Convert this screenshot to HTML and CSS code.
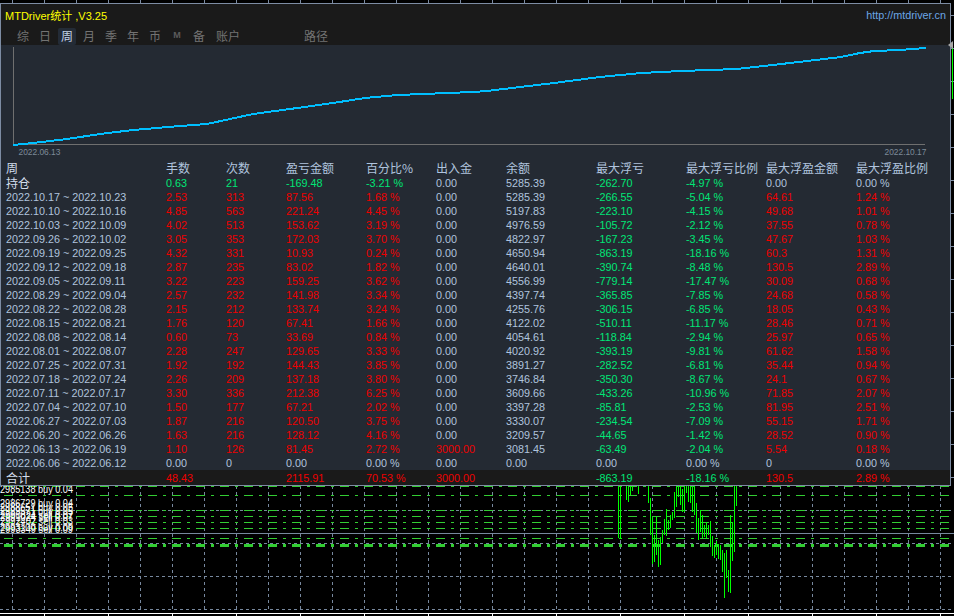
FILE: index.html
```html
<!DOCTYPE html>
<html lang="zh">
<head>
<meta charset="utf-8">
<title>MTDriver统计</title>
<link rel="stylesheet" href="styles.css">
</head>
<body>
<div class="desk">
<svg class="market" width="954" height="616" viewBox="0 0 954 616">
  <g class="grid">
    <path d="M0 510.5H954M0 543.5H954M0 576.5H954M0 609.5H954"/>
    <path d="M12.5 486V612M44.5 486V612M76.5 486V612M108.5 486V612M140.5 486V612M172.5 486V612M204.5 486V612M236.5 486V612M268.5 486V612M300.5 486V612M332.5 486V612M364.5 486V612M396.5 486V612M428.5 486V612M460.5 486V612M492.5 486V612M524.5 486V612M556.5 486V612M588.5 486V612M620.5 486V612M652.5 486V612M684.5 486V612M716.5 486V612M748.5 486V612M780.5 486V612M812.5 486V612M844.5 486V612M876.5 486V612M908.5 486V612M940.5 486V612"/>
  </g>
  <path class="level" d="M0 533.5H954"/>
  <g class="orders">
    <path d="M-20 486.5H954M-20 495.5H954M-20 510.5H954M-20 516.5H954M-20 522.5H954M-20 528.5H954M-20 538.5H954"/>
    <path class="thick" d="M-20 545H954"/>
  </g>
  <g class="sticks" transform="translate(560 470) scale(.33333)">
    <path d="M176 44V205M181 44V205M176 205H187M199 44V90M205 44V95M211 44V75M217 44V62M235 44V72M265 44V100M271 85V195M277 140V283M283 195V275M289 140V255M295 210V290M301 200V285M307 180V220M313 148V195M319 118V198M325 150V180M331 135V175M337 125V150M343 65V145M349 44V110M355 44V80M361 44V105M367 58V125M373 44V125M379 44V70M385 44V95M391 44V100M397 44V125M403 44V135M409 98V190M415 145V210M421 120V185M427 135V205M433 165V200M439 155V205M445 165V195M451 152V230M457 198V258M463 225V263M469 212V255M475 222V268M481 225V270M487 240V305M493 250V383M499 240V325M505 300V365M511 135V368M517 155V272M523 44V245M529 44V108"/>
  </g>
  <g class="labels">
    <text x="0" y="493" textLength="73" lengthAdjust="spacingAndGlyphs">2985138 buy 0.04</text>
    <text x="0" y="507" textLength="73" lengthAdjust="spacingAndGlyphs">2986729 buy 0.04</text>
    <text x="0" y="511" textLength="73" lengthAdjust="spacingAndGlyphs">2988651 buy 0.05</text>
    <text x="0" y="515" textLength="73" lengthAdjust="spacingAndGlyphs">2989571 buy 0.05</text>
    <text x="0" y="519" textLength="73" lengthAdjust="spacingAndGlyphs">2990824 sell 0.07</text>
    <text x="0" y="521" textLength="73" lengthAdjust="spacingAndGlyphs">2991024 sell 0.07</text>
    <text x="0" y="525" textLength="73" lengthAdjust="spacingAndGlyphs">2992402 sell 0.03</text>
    <text x="0" y="531" textLength="73" lengthAdjust="spacingAndGlyphs">2993100 buy 0.09</text>
    <text x="0" y="533" textLength="73" lengthAdjust="spacingAndGlyphs">2993349 sell 0.09</text>
  </g>
  <path class="ticks" d="M12.5 0V3M44.5 0V3M76.5 0V3M108.5 0V3M140.5 0V3M172.5 0V3M204.5 0V3M236.5 0V3M268.5 0V3M300.5 0V3M332.5 0V3M364.5 0V3M396.5 0V3M428.5 0V3M460.5 0V3M492.5 0V3M524.5 0V3M556.5 0V3M588.5 0V3M620.5 0V3M652.5 0V3M684.5 0V3M716.5 0V3M748.5 0V3M780.5 0V3M812.5 0V3M844.5 0V3M876.5 0V3M908.5 0V3M940.5 0V3"/>
  <path class="ticks" d="M951 15.5H954M951 48.5H954M951 81.5H954M951 114.5H954M951 147.5H954M951 180.5H954M951 213.5H954M951 246.5H954M951 279.5H954M951 312.5H954M951 345.5H954M951 378.5H954M951 411.5H954M951 444.5H954M951 477.5H954"/>
  <path class="timeaxis" d="M0 613.5H954M44.5 613V616M108.5 613V616M172.5 613V616M236.5 613V616M300.5 613V616M364.5 613V616M428.5 613V616M492.5 613V616M556.5 613V616M620.5 613V616M684.5 613V616M748.5 613V616M812.5 613V616M876.5 613V616M940.5 613V616"/>
  <path class="bar" d="M952.5 48V99"/>
</svg>

<section class="panel">
  <header class="head">
    <div class="titlebar">
      <span class="title">MTDriver统计 ,V3.25</span>
      <span class="url">http://mtdriver.cn</span>
    </div>
    <nav class="tabs">
      <span class="tab">综</span>
      <span class="tab">日</span>
      <span class="tab active">周</span>
      <span class="tab">月</span>
      <span class="tab">季</span>
      <span class="tab">年</span>
      <span class="tab">币</span>
      <span class="tab mini">M</span>
      <span class="tab">备</span>
      <span class="tab wide">账户</span>
      <span class="tab path">路径</span>
    </nav>
  </header>
  <div class="equity">
    <svg width="948" height="117" viewBox="1 45 948 117">
      <path class="axis" d="M13.5 47V144.5H925"/>
      <polyline class="curve" points="13,145 33,143 67,139 100,134 133,130 180,126 207,124 230,119 253,114 290,109 333,103 365,98 397,95 423,94 473,92 487,91 520,87 554,83 600,77 641,73 681,71 737,69 790,63 841,57 860,53 874,51 900,50 926,48"/>
      <text class="stamp" x="18.5" y="155">2022.06.13</text>
      <text class="stamp" x="884.5" y="155">2022.10.17</text>
    </svg>
    <span class="grip"></span>
  </div>
  <div class="table">
    <div class="row top"><span class="em">周</span><span>手数</span><span>次数</span><span>盈亏金额</span><span>百分比%</span><span>出入金</span><span>余额</span><span>最大浮亏</span><span>最大浮亏比例</span><span>最大浮盈金额</span><span>最大浮盈比例</span></div>
    <div class="row"><span class="em cjk">持仓</span><span class="g">0.63</span><span class="g">21</span><span class="g">-169.48</span><span class="g">-3.21 %</span><span>0.00</span><span>5285.39</span><span class="g">-262.70</span><span class="g">-4.97 %</span><span>0.00</span><span>0.00 %</span></div>
    <div class="row"><span>2022.10.17 ~ 2022.10.23</span><span class="r">2.53</span><span class="r">313</span><span class="r">87.56</span><span class="r">1.68 %</span><span>0.00</span><span>5285.39</span><span class="g">-266.55</span><span class="g">-5.04 %</span><span class="r">64.61</span><span class="r">1.24 %</span></div>
    <div class="row"><span>2022.10.10 ~ 2022.10.16</span><span class="r">4.85</span><span class="r">563</span><span class="r">221.24</span><span class="r">4.45 %</span><span>0.00</span><span>5197.83</span><span class="g">-223.10</span><span class="g">-4.15 %</span><span class="r">49.68</span><span class="r">1.01 %</span></div>
    <div class="row"><span>2022.10.03 ~ 2022.10.09</span><span class="r">4.02</span><span class="r">513</span><span class="r">153.62</span><span class="r">3.19 %</span><span>0.00</span><span>4976.59</span><span class="g">-105.72</span><span class="g">-2.12 %</span><span class="r">37.55</span><span class="r">0.78 %</span></div>
    <div class="row"><span>2022.09.26 ~ 2022.10.02</span><span class="r">3.05</span><span class="r">353</span><span class="r">172.03</span><span class="r">3.70 %</span><span>0.00</span><span>4822.97</span><span class="g">-167.23</span><span class="g">-3.45 %</span><span class="r">47.67</span><span class="r">1.03 %</span></div>
    <div class="row"><span>2022.09.19 ~ 2022.09.25</span><span class="r">4.32</span><span class="r">331</span><span class="r">10.93</span><span class="r">0.24 %</span><span>0.00</span><span>4650.94</span><span class="g">-863.19</span><span class="g">-18.16 %</span><span class="r">60.3</span><span class="r">1.31 %</span></div>
    <div class="row"><span>2022.09.12 ~ 2022.09.18</span><span class="r">2.87</span><span class="r">235</span><span class="r">83.02</span><span class="r">1.82 %</span><span>0.00</span><span>4640.01</span><span class="g">-390.74</span><span class="g">-8.48 %</span><span class="r">130.5</span><span class="r">2.89 %</span></div>
    <div class="row"><span>2022.09.05 ~ 2022.09.11</span><span class="r">3.22</span><span class="r">223</span><span class="r">159.25</span><span class="r">3.62 %</span><span>0.00</span><span>4556.99</span><span class="g">-779.14</span><span class="g">-17.47 %</span><span class="r">30.09</span><span class="r">0.68 %</span></div>
    <div class="row"><span>2022.08.29 ~ 2022.09.04</span><span class="r">2.57</span><span class="r">232</span><span class="r">141.98</span><span class="r">3.34 %</span><span>0.00</span><span>4397.74</span><span class="g">-365.85</span><span class="g">-7.85 %</span><span class="r">24.68</span><span class="r">0.58 %</span></div>
    <div class="row"><span>2022.08.22 ~ 2022.08.28</span><span class="r">2.15</span><span class="r">212</span><span class="r">133.74</span><span class="r">3.24 %</span><span>0.00</span><span>4255.76</span><span class="g">-306.15</span><span class="g">-6.85 %</span><span class="r">18.05</span><span class="r">0.43 %</span></div>
    <div class="row"><span>2022.08.15 ~ 2022.08.21</span><span class="r">1.76</span><span class="r">120</span><span class="r">67.41</span><span class="r">1.66 %</span><span>0.00</span><span>4122.02</span><span class="g">-510.11</span><span class="g">-11.17 %</span><span class="r">28.46</span><span class="r">0.71 %</span></div>
    <div class="row"><span>2022.08.08 ~ 2022.08.14</span><span class="r">0.60</span><span class="r">73</span><span class="r">33.69</span><span class="r">0.84 %</span><span>0.00</span><span>4054.61</span><span class="g">-118.84</span><span class="g">-2.94 %</span><span class="r">25.97</span><span class="r">0.65 %</span></div>
    <div class="row"><span>2022.08.01 ~ 2022.08.07</span><span class="r">2.28</span><span class="r">247</span><span class="r">129.65</span><span class="r">3.33 %</span><span>0.00</span><span>4020.92</span><span class="g">-393.19</span><span class="g">-9.81 %</span><span class="r">61.62</span><span class="r">1.58 %</span></div>
    <div class="row"><span>2022.07.25 ~ 2022.07.31</span><span class="r">1.92</span><span class="r">192</span><span class="r">144.43</span><span class="r">3.85 %</span><span>0.00</span><span>3891.27</span><span class="g">-282.52</span><span class="g">-6.81 %</span><span class="r">35.44</span><span class="r">0.94 %</span></div>
    <div class="row"><span>2022.07.18 ~ 2022.07.24</span><span class="r">2.26</span><span class="r">209</span><span class="r">137.18</span><span class="r">3.80 %</span><span>0.00</span><span>3746.84</span><span class="g">-350.30</span><span class="g">-8.67 %</span><span class="r">24.1</span><span class="r">0.67 %</span></div>
    <div class="row"><span>2022.07.11 ~ 2022.07.17</span><span class="r">3.30</span><span class="r">336</span><span class="r">212.38</span><span class="r">6.25 %</span><span>0.00</span><span>3609.66</span><span class="g">-433.26</span><span class="g">-10.96 %</span><span class="r">71.85</span><span class="r">2.07 %</span></div>
    <div class="row"><span>2022.07.04 ~ 2022.07.10</span><span class="r">1.50</span><span class="r">177</span><span class="r">67.21</span><span class="r">2.02 %</span><span>0.00</span><span>3397.28</span><span class="g">-85.81</span><span class="g">-2.53 %</span><span class="r">81.95</span><span class="r">2.51 %</span></div>
    <div class="row"><span>2022.06.27 ~ 2022.07.03</span><span class="r">1.87</span><span class="r">216</span><span class="r">120.50</span><span class="r">3.75 %</span><span>0.00</span><span>3330.07</span><span class="g">-234.54</span><span class="g">-7.09 %</span><span class="r">55.15</span><span class="r">1.71 %</span></div>
    <div class="row"><span>2022.06.20 ~ 2022.06.26</span><span class="r">1.63</span><span class="r">216</span><span class="r">128.12</span><span class="r">4.16 %</span><span>0.00</span><span>3209.57</span><span class="g">-44.65</span><span class="g">-1.42 %</span><span class="r">28.52</span><span class="r">0.90 %</span></div>
    <div class="row"><span>2022.06.13 ~ 2022.06.19</span><span class="r">1.10</span><span class="r">126</span><span class="r">81.45</span><span class="r">2.72 %</span><span class="r">3000.00</span><span>3081.45</span><span class="g">-63.49</span><span class="g">-2.04 %</span><span class="r">5.54</span><span class="r">0.18 %</span></div>
    <div class="row"><span>2022.06.06 ~ 2022.06.12</span><span>0.00</span><span>0</span><span>0.00</span><span>0.00 %</span><span>0.00</span><span>0.00</span><span>0.00</span><span>0.00 %</span><span>0</span><span>0.00 %</span></div>
    <div class="row total"><span class="em cjk">合计</span><span class="r">48.43</span><span></span><span class="r">2115.91</span><span class="r">70.53 %</span><span class="r">3000.00</span><span></span><span class="g">-863.19</span><span class="g">-18.16 %</span><span class="r">130.5</span><span class="r">2.89 %</span></div>
  </div>
</section>
</div>
</body>
</html>
```

FILE: styles.css
```css
html, body {
  margin: 0;
  padding: 0;
  background: #000;
  overflow: hidden;
}

.desk {
  position: relative;
  width: 954px;
  height: 616px;
  overflow: hidden;
  font-family: "Liberation Sans", "Noto Sans CJK SC", sans-serif;
}

.market {
  position: absolute;
  left: 0;
  top: 0;
  display: block;
}

.market path {
  fill: none;
  shape-rendering: crispEdges;
}

.grid path {
  stroke: #77889e;
  stroke-width: 1;
  stroke-dasharray: 3 3;
}

.level {
  stroke: #77889e;
  stroke-width: 1;
}

.orders path {
  stroke: #32cd32;
  stroke-width: 1;
  stroke-dasharray: 9 6 3 6;
}

.orders .thick {
  stroke-width: 3;
}

.sticks path {
  stroke: #00ff00;
  stroke-width: 3;
}

.labels text {
  fill: #fff;
  font-size: 10.6px;
}

.ticks {
  stroke: #7d8ca3;
  stroke-width: 1;
}

.timeaxis {
  stroke: #fff;
  stroke-width: 1;
}

.bar {
  stroke: #00ff00;
  stroke-width: 1;
}

.panel {
  position: absolute;
  left: 0;
  top: 3px;
  box-sizing: border-box;
  width: 951px;
  height: 483px;
  border: 1px solid #7d8ca3;
  background: #242a33;
  display: flex;
  flex-direction: column;
}

.head {
  height: 41px;
  background: #1a1a1a;
  display: flex;
  flex-direction: column;
}

.titlebar {
  height: 21px;
  padding: 0 4px;
  display: flex;
  justify-content: space-between;
  align-items: center;
}

.title {
  color: #ffff00;
  font-size: 11px;
}

.url {
  color: #6ca6e6;
  font-size: 10.8px;
}

.tabs {
  flex: 1;
  display: flex;
  padding-left: 11px;
  align-items: flex-end;
}

.tab {
  width: 22px;
  height: 17px;
  line-height: 15px;
  text-align: center;
  font-size: 12px;
  color: #737373;
  font-family: "Noto Sans CJK SC", sans-serif;
  box-sizing: border-box;
}

.tab.active {
  background: #232b36;
  color: #c3d3e6;
  border-radius: 2px;
  width: 18px;
  margin: 0 2px;
}

.tab.mini {
  font-size: 9px;
  font-weight: 700;
  font-family: "Liberation Sans", sans-serif;
  color: #5c5c5c;
}

.tab.wide {
  width: 26px;
  margin-left: 5px;
}

.tab.path {
  width: 28px;
  margin-left: 61px;
}

.equity {
  position: relative;
  height: 117px;
}

.equity svg {
  display: block;
}

.axis {
  fill: none;
  stroke: #6f6f6f;
  stroke-width: 1;
  shape-rendering: crispEdges;
}

.curve {
  fill: none;
  stroke: #00bfff;
  stroke-width: 2;
  shape-rendering: crispEdges;
}

.stamp {
  fill: #7d8a99;
  font-size: 8.4px;
}

.grip {
  position: absolute;
  right: -3px;
  top: -4px;
  border-style: solid;
  border-width: 4px 5px 4px 0;
  border-color: transparent #a8a8a8 transparent transparent;
}

.table {
  flex: 1;
  display: flex;
  flex-direction: column;
}

.row {
  display: grid;
  grid-template-columns: 160px 60px 60px 80px 70px 70px 90px 90px 80px 90px 1fr;
  height: 14px;
  line-height: 14px;
  padding-left: 5px;
  font-size: 10.8px;
  color: #b0c4de;
  white-space: nowrap;
}

.row.top,
.cjk {
  font-family: "Noto Sans CJK SC", sans-serif;
  font-size: 12px;
}

.row.top {
  line-height: 12px;
}

.em {
  color: #d3deec;
}

.r {
  color: #ee0000;
}

.g {
  color: #00e676;
}

.row.total {
  background: #1a1a1a;
  line-height: 16px;
  height: 15px;
}
```
